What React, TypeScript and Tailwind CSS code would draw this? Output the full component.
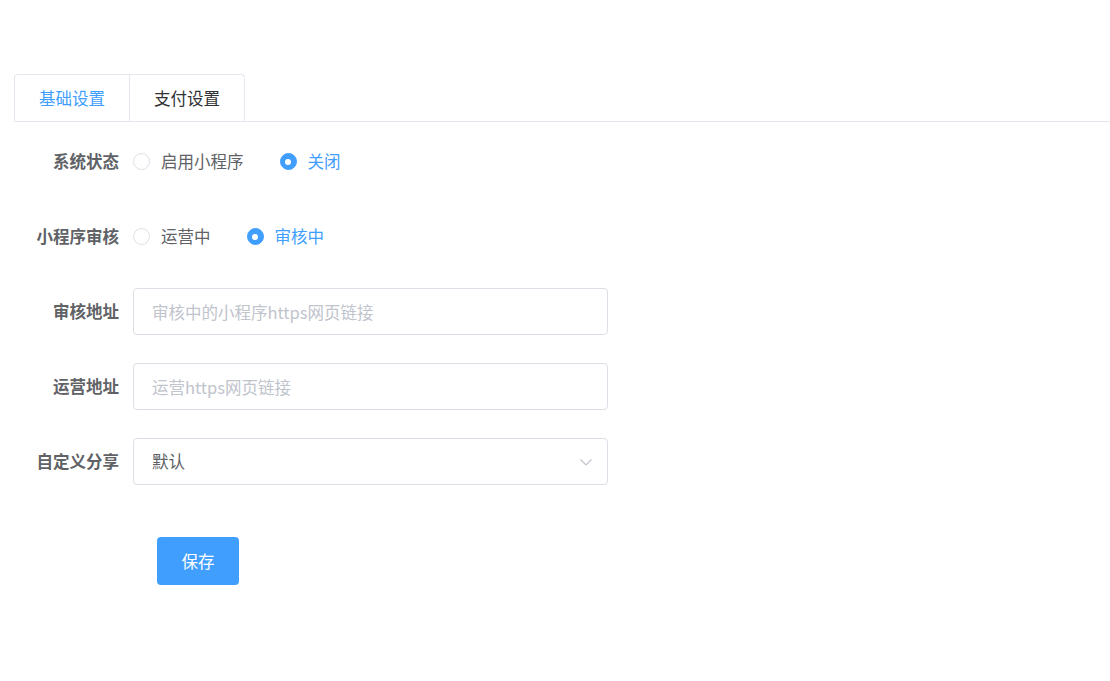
import React from "react";

const font = { fontFamily: '"Microsoft YaHei", "Noto Sans CJK SC", "Noto Sans", sans-serif' };

function Radio({ label, checked }: { label: string; checked?: boolean }) {
  return (
    <label className="flex items-center mr-[36px] cursor-pointer">
      {checked ? (
        <span className="w-[17px] h-[17px] rounded-full bg-[#409eff] border border-[#409eff] flex items-center justify-center">
          <span className="w-[6px] h-[6px] rounded-full bg-white" />
        </span>
      ) : (
        <span className="w-[17px] h-[17px] rounded-full bg-white border border-[#dcdfe6]" />
      )}
      <span className={`ml-[11px] text-[16.5px] ${checked ? "text-[#409eff]" : "text-[#606266]"}`}>{label}</span>
    </label>
  );
}

function Row({ label, children }: { label: string; children: React.ReactNode }) {
  return (
    <div className="flex items-center h-[47px] mb-[28px]">
      <div className="w-[119px] pr-[14px] text-right text-[16.5px] font-bold text-[#606266] whitespace-nowrap">{label}</div>
      <div className="flex items-center">{children}</div>
    </div>
  );
}

export default function App() {
  return (
    <div className="w-[1110px] h-[681px] bg-white" style={font}>
      <div className="pt-[74px] pl-[14px]">
        <div className="flex border-b border-[#e4e7ed] h-[48px]">
          <div className="flex border border-b-0 border-[#e4e7ed] rounded-t-[4px]">
            <div className="w-[114px] flex items-center justify-center text-[16.5px] text-[#409eff]">基础设置</div>
            <div className="w-[115px] flex items-center justify-center text-[16.5px] text-[#303133] border-l border-[#e4e7ed]">支付设置</div>
          </div>
        </div>
        <div className="pt-[16px]">
          <Row label="系统状态">
            <Radio label="启用小程序" />
            <Radio label="关闭" checked />
          </Row>
          <Row label="小程序审核">
            <Radio label="运营中" />
            <Radio label="审核中" checked />
          </Row>
          <Row label="审核地址">
            <input
              className="w-[475px] h-[47px] border border-[#dcdfe6] rounded-[4px] px-[18px] text-[16.5px] text-[#606266] placeholder:text-[#c0c4cc] outline-none"
              placeholder="审核中的小程序https网页链接"
              style={font}
            />
          </Row>
          <Row label="运营地址">
            <input
              className="w-[475px] h-[47px] border border-[#dcdfe6] rounded-[4px] px-[18px] text-[16.5px] text-[#606266] placeholder:text-[#c0c4cc] outline-none"
              placeholder="运营https网页链接"
              style={font}
            />
          </Row>
          <Row label="自定义分享">
            <div className="w-[475px] h-[47px] border border-[#dcdfe6] rounded-[4px] pl-[18px] pr-[14px] flex items-center justify-between">
              <span className="text-[16.5px] text-[#606266]">默认</span>
              <svg width="14" height="14" viewBox="0 0 14 14" fill="none">
                <path d="M1.5 4.5 L7 10 L12.5 4.5" stroke="#c0c4cc" strokeWidth="1.2" />
              </svg>
            </div>
          </Row>
          <div className="pl-[143px] pt-[24px]">
            <button className="w-[82px] h-[48px] bg-[#409eff] rounded-[4px] text-white text-[16.5px]" style={font}>保存</button>
          </div>
        </div>
      </div>
    </div>
  );
}
